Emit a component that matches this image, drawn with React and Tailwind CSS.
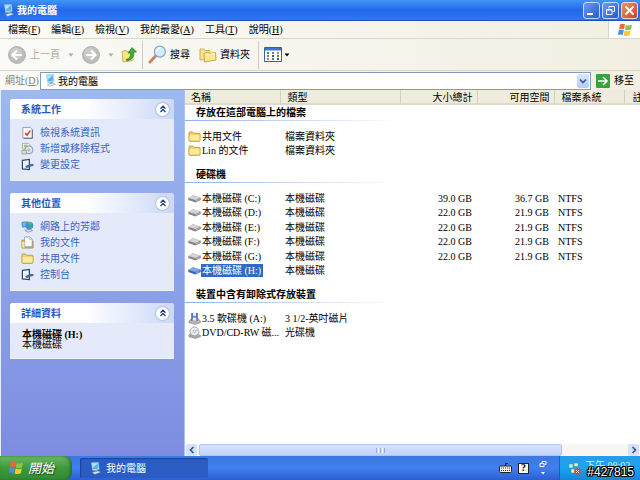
import React from 'react';

const ComputerIcon = ({ className }) => (
  <svg className={className} viewBox="0 0 16 16" aria-hidden="true">
    <path d="M3 1 11.500.5l1 8.500-8 1.500z" fill="#d8ecfa" stroke="#8fb8dc" strokeWidth=".7" />
    <path d="M4 2 10.700 1.500l.8 6.500-6.500 1.200z" fill="#4fb4f4" />
    <path d="M4 2 10.700 1.500l-6 5.500z" fill="#b4e6fd" />
    <path d="m6.500 10 4-.7.6 2-4 .7z" fill="#8ea6bc" />
    <path d="m4 12.800 7.500-1.800 2.500 1.500-7 2.700z" fill="#e6eef6" stroke="#7890b0" strokeWidth=".7" />
  </svg>
);

const WindowsFlag = ({ className }) => (
  <svg className={className} viewBox="0 0 16 14" aria-hidden="true">
    <path d="M3 1.500Q5.500.2 8 1.500L7 6.300Q4.500 5.200 2 6.300z" fill="#e8683c" />
    <path d="M8.800 1.900Q11.500 3 15 1.800L14 6.600Q11 8 7.900 6.700z" fill="#8cc63c" />
    <path d="M1.800 7.200Q4.300 6 6.800 7.200L5.800 12Q3.300 10.800.8 12z" fill="#4a90e2" />
    <path d="M7.600 7.600Q10.500 9 13.800 7.500L12.800 12.300Q9.500 13.600 6.600 12.400z" fill="#f8c832" />
  </svg>
);

const FolderIcon = ({ className }) => (
  <svg className={className} viewBox="0 0 14 12" aria-hidden="true">
    <path d="M1 2.500Q1 1.200 2 1.200h3l1.200 1.300H12q1 0 1 1V10q0 1.200-1 1.200H2q-1 0-1-1.200z" fill="#f3d469" stroke="#b8922f" strokeWidth=".9" />
    <path d="M1.800 4.500h10.500v5.700H1.800z" fill="#fbeaa0" />
  </svg>
);

const DriveIcon = ({ className, selected }) => (
  <svg className={className} viewBox="0 0 14 10" aria-hidden="true">
    <path d="M.3 4.500 5.500 1.500l8.200 2.700v2.300L8 9.300.3 6.700z" fill={selected ? '#3a63b4' : '#858585'} />
    <path d="M.3 4.500 5.500 1.500l8.200 2.700L8 6.700z" fill={selected ? '#82a8e4' : '#d4d4d4'} />
    <path d="m8.300 7.200 4-1.700v.9l-4 1.900z" fill={selected ? '#a8c8f8' : '#c4c4c4'} />
  </svg>
);

const FloppyIcon = ({ className }) => (
  <svg className={className} viewBox="0 0 14 14" aria-hidden="true">
    <path d="M1 9.500 4 7h7l2.500 3v1.500L8 13.500 1 11.500z" fill="#b4b4b4" stroke="#858585" strokeWidth=".6" />
    <path d="M3.500 1h7v8.500h-7z" fill="#4660b0" />
    <path d="M5.200 1h3.600v3.500H5.200zM5 6h4v3.500H5z" fill="#e6ebf8" />
  </svg>
);

const DiscIcon = ({ className }) => (
  <svg className={className} viewBox="0 0 14 14" aria-hidden="true">
    <path d="M1 9.500 5 7.500l8.500 2.500v1.500L8 13.500 1 11.500z" fill="#a8a8a8" stroke="#858585" strokeWidth=".6" />
    <circle cx="7" cy="5.800" r="4.800" fill="#e9ebee" stroke="#909498" strokeWidth=".8" />
    <path d="M7 5.800 10.500 2.500 11.600 5z" fill="#bcd8f0" />
    <circle cx="7" cy="5.800" r="1.400" fill="#fff" stroke="#8f9398" strokeWidth=".7" />
  </svg>
);

const InfoIcon = ({ className }) => (
  <svg className={className} viewBox="0 0 14 14" aria-hidden="true">
    <path d="M2 1.500h8l2 2V13H2z" fill="#fff" stroke="#8b98b4" />
    <path d="M12.300 4v9.300H3" fill="none" stroke="#5f6b86" />
    <path d="m4.500 7.500 2 2.500L10 5" fill="none" stroke="#d93a2b" strokeWidth="1.700" />
  </svg>
);

const ProgramsIcon = ({ className }) => (
  <svg className={className} viewBox="0 0 14 14" aria-hidden="true">
    <path d="M1.500 1.500H8l2 2v4h-8.500z" fill="#f2f5ea" stroke="#9aa584" strokeWidth=".8" />
    <path d="M3 3.500h4M3 5.200h3" stroke="#8eae50" />
    <circle cx="8.500" cy="8.500" r="4.300" fill="#dfe6ee" stroke="#7888a0" strokeWidth=".9" />
    <circle cx="8.500" cy="8.500" r="1.200" fill="#fff" stroke="#7888a0" strokeWidth=".7" />
    <path d="M1 9h5v4H1z" fill="#d6dccb" stroke="#8b9478" strokeWidth=".7" />
  </svg>
);

const SettingsIcon = ({ className }) => (
  <svg className={className} viewBox="0 0 14 14" aria-hidden="true">
    <path d="M1.500 2.500 9 1.500v11l-7.500-.8z" fill="#eaf3fc" stroke="#27496f" strokeWidth="1.300" />
    <path d="m5 9 5.500-2.200 2.800.2-.5 1.400-2.600.4L6 10.500z" fill="#56789e" stroke="#2d4766" strokeWidth=".6" />
  </svg>
);

const NetworkIcon = ({ className }) => (
  <svg className={className} viewBox="0 0 14 14" aria-hidden="true">
    <path d="M1 2.500 7 2l.5 5-6 .7z" fill="#62bdf0" stroke="#4678a8" strokeWidth=".8" />
    <circle cx="9" cy="6" r="4.200" fill="#3a92d8" />
    <path d="M7 3q3-2 5 .5L10 6 8.500 5zM9 8l3-1-1 2.500z" fill="#64bd50" />
    <path d="m4 11 6-1 2.500 1.500-5 1.800z" fill="#d8dde6" stroke="#75839b" strokeWidth=".7" />
  </svg>
);

const DocumentsIcon = ({ className }) => (
  <svg className={className} viewBox="0 0 14 14" aria-hidden="true">
    <path d="M1 4.500h3l1 1h8V13H1z" fill="#eec250" stroke="#a8802c" strokeWidth=".8" />
    <path d="M4 1h5.500L12 3.200v8.300H4z" fill="#fff" stroke="#7790b8" strokeWidth=".8" />
    <path d="M9 1.500v2.300h2.500" fill="none" stroke="#9bb4dc" strokeWidth=".8" />
    <path d="M1.300 6.500h2.500v6H1.300z" fill="#fbe7a0" />
  </svg>
);

const NavCircle = ({ className, flip }) => (
  <svg className={className} viewBox="0 0 18 18" aria-hidden="true">
    <circle cx="9" cy="9" r="8.500" fill="#bcbcb9" stroke="#aaaaa6" strokeWidth=".8" />
    <circle cx="8" cy="7.500" r="6" fill="#cacac7" />
    <path d={flip ? 'M4 9h9M9 4.500 13.500 9 9 13.500' : 'M14 9H5M9 4.500 4.500 9 9 13.500'} fill="none" stroke="#fff" strokeWidth="2.200" />
  </svg>
);

const UpFolderIcon = ({ className }) => (
  <svg className={className} viewBox="0 0 16 16" aria-hidden="true">
    <path d="m1 4.500 4-1 1 1.500 6-1v9.500L2 15z" fill="#f8e38a" stroke="#c7a23c" strokeWidth=".8" />
    <path d="M5 12.500q5-1 4.500-6.500H7l4-5.500L15.500 5h-2.700q1 7-6.800 9z" fill="#43ae35" stroke="#247c22" strokeWidth=".7" />
  </svg>
);

const SearchIcon = ({ className }) => (
  <svg className={className} viewBox="0 0 20 20" aria-hidden="true">
    <path d="m2 18 6-6.500" stroke="#c68258" strokeWidth="3" strokeLinecap="round" />
    <circle cx="12.500" cy="7" r="5.800" fill="#d3ecfb" stroke="#86a9cd" strokeWidth="1.300" />
    <path d="M9 6.500q1-3.200 4-3.300" fill="none" stroke="#fff" strokeWidth="1.500" />
  </svg>
);

const FoldersIcon = ({ className }) => (
  <svg className={className} viewBox="0 0 18 16" aria-hidden="true">
    <path d="M1 2h4l1 1.500h5V12l-10 1z" fill="#f7e394" stroke="#cfa945" strokeWidth=".9" />
    <path d="M5 6.500 9 5l1 1.500 6.500-1L17 13 5.500 15z" fill="#fbe88e" stroke="#c99d35" strokeWidth=".9" />
    <path d="m6 8 10-1.500" stroke="#fff8d0" />
  </svg>
);

const ViewsIcon = ({ className }) => (
  <svg className={className} viewBox="0 0 18 15" aria-hidden="true">
    <path d="M.5.5h17v14H.5z" fill="#fff" stroke="#33609f" />
    <path d="M1 1h16v2.500H1z" fill="#3c76cc" />
    <path d="M3 5h2v2H3zM13 8h2v2h-2z" fill="#4a8a4a" />
    <path d="M8 5h2v2H8zM3 8h2v2H3z" fill="#6d7f9e" />
    <path d="M13 5h2v2h-2zM3 11h2v2H3z" fill="#d4764e" />
    <path d="M8 8h2v2H8zM13 11h2v2h-2z" fill="#3c5aa8" />
    <path d="M8 11h2v2H8z" fill="#4a8a4a" />
  </svg>
);

const Chevron = ({ className, d }) => (
  <svg className={className} viewBox="0 0 8 8" aria-hidden="true">
    <path d={d} fill="none" stroke="#3d5688" strokeWidth="1.700" />
  </svg>
);

const Caret = ({ className }) => (
  <svg className={className} viewBox="0 0 6 4" aria-hidden="true">
    <path d="M.5.5h5L3 3.500z" fill="currentColor" />
  </svg>
);

const menus = [
  ['檔案', 'F'],
  ['編輯', 'E'],
  ['檢視', 'V'],
  ['我的最愛', 'A'],
  ['工具', 'T'],
  ['說明', 'H'],
];

const systemTasks = [
  { icon: InfoIcon, label: '檢視系統資訊' },
  { icon: ProgramsIcon, label: '新增或移除程式' },
  { icon: SettingsIcon, label: '變更設定' },
];

const otherPlaces = [
  { icon: NetworkIcon, label: '網路上的芳鄰' },
  { icon: DocumentsIcon, label: '我的文件' },
  { icon: FolderIcon, label: '共用文件' },
  { icon: SettingsIcon, label: '控制台' },
];

const groups = [
  {
    title: '存放在這部電腦上的檔案',
    items: [
      { icon: FolderIcon, name: '共用文件', type: '檔案資料夾' },
      { icon: FolderIcon, name: 'Lin 的文件', type: '檔案資料夾' },
    ],
  },
  {
    title: '硬碟機',
    items: [
      { icon: DriveIcon, name: '本機磁碟 (C:)', type: '本機磁碟', size: '39.0 GB', free: '36.7 GB', fs: 'NTFS' },
      { icon: DriveIcon, name: '本機磁碟 (D:)', type: '本機磁碟', size: '22.0 GB', free: '21.9 GB', fs: 'NTFS' },
      { icon: DriveIcon, name: '本機磁碟 (E:)', type: '本機磁碟', size: '22.0 GB', free: '21.9 GB', fs: 'NTFS' },
      { icon: DriveIcon, name: '本機磁碟 (F:)', type: '本機磁碟', size: '22.0 GB', free: '21.9 GB', fs: 'NTFS' },
      { icon: DriveIcon, name: '本機磁碟 (G:)', type: '本機磁碟', size: '22.0 GB', free: '21.9 GB', fs: 'NTFS' },
      { icon: DriveIcon, name: '本機磁碟 (H:)', type: '本機磁碟', selected: true },
    ],
  },
  {
    title: '裝置中含有卸除式存放裝置',
    items: [
      { icon: FloppyIcon, name: '3.5 軟碟機 (A:)', type: '3 1/2-英吋磁片' },
      { icon: DiscIcon, name: 'DVD/CD-RW 磁...', type: '光碟機' },
    ],
  },
];

const TitleBar = () => (
  <header className="flex h-[21px] shrink-0 items-center bg-linear-to-b from-[#3f95f8] via-[#2468e8] to-[#2a78f4] pl-[2px] pr-[2px] border-b border-[#1c4fc0]">
    <ComputerIcon className="h-[13px] w-[13px]" />
    <h1 className="ml-[2px] flex-1 font-bold text-white">我的電腦</h1>
    <div className="flex gap-[2px]">
      <button aria-label="最小化" className="flex h-[17px] w-[17px] items-center justify-center rounded-[3px] border border-[#c8dafa] bg-linear-to-br from-[#6e9df5] to-[#2456d0]">
        <svg className="h-[11px] w-[11px]" viewBox="0 0 11 11"><path d="M1 8h6v2H1z" fill="#fff" /></svg>
      </button>
      <button aria-label="還原" className="flex h-[17px] w-[17px] items-center justify-center rounded-[3px] border border-[#c8dafa] bg-linear-to-br from-[#6e9df5] to-[#2456d0]">
        <svg className="h-[11px] w-[11px]" viewBox="0 0 11 11" fill="none" stroke="#fff"><path d="M4 3.500v-2h5.500v5H8M1.500 4.500H7v5H1.500zM1 5h6" /></svg>
      </button>
      <button aria-label="關閉" className="flex h-[17px] w-[17px] items-center justify-center rounded-[3px] border border-[#f4d4cc] bg-linear-to-br from-[#f0906c] to-[#cc4420]">
        <svg className="h-[11px] w-[11px]" viewBox="0 0 11 11"><path d="m1.500 1.500 8 8m0-8-8 8" stroke="#fff" strokeWidth="1.800" /></svg>
      </button>
    </div>
  </header>
);

const MenuBar = () => (
  <nav className="flex h-[18px] shrink-0 border-b border-[#dad7c8] bg-linear-to-r from-[#fafaf7] to-[#f2efe2]">
    <div className="flex flex-1 items-center gap-[11px] pl-2">
      {menus.map(([label, key]) => (
        <button key={key} className="whitespace-nowrap">
          {label}(<u>{key}</u>)
        </button>
      ))}
    </div>
    <div className="flex w-8 items-center justify-center border-l border-[#d8d5c6] bg-white">
      <WindowsFlag className="h-[14px] w-4" />
    </div>
  </nav>
);

const Toolbar = () => (
  <div className="flex h-8 shrink-0 items-center border-b border-[#d8d5c6] bg-linear-to-r from-[#fafaf7] to-[#f2efe2] pl-2">
    <button className="flex items-center text-[#aaa99f]">
      <NavCircle className="h-[18px] w-[18px]" />
      <span className="ml-1">上一頁</span>
      <Caret className="ml-2 h-1 w-[6px]" />
    </button>
    <button aria-label="下一頁" className="ml-2 flex items-center text-[#aaa99f]">
      <NavCircle className="h-[18px] w-[18px]" flip />
      <Caret className="ml-2 h-1 w-[6px]" />
    </button>
    <button aria-label="上移" className="ml-[7px]">
      <UpFolderIcon className="h-4 w-4" />
    </button>
    <div className="ml-[5px] h-7 w-px bg-[#d0cdbf]" />
    <button className="ml-[5px] flex items-center">
      <SearchIcon className="h-[19px] w-[19px]" />
      <span className="ml-[3px]">搜尋</span>
    </button>
    <button className="ml-[9px] flex items-center">
      <FoldersIcon className="h-4 w-[18px]" />
      <span className="ml-[3px]">資料夾</span>
    </button>
    <div className="ml-2 h-7 w-px bg-[#d0cdbf]" />
    <button aria-label="檢視模式" className="ml-[5px] flex items-center">
      <ViewsIcon className="h-[15px] w-[18px]" />
      <Caret className="ml-[2px] h-1 w-[6px]" />
    </button>
  </div>
);

const AddressBar = () => (
  <div className="flex h-[19px] shrink-0 items-center bg-linear-to-r from-[#fafaf7] to-[#f2efe2] pl-[5px] pr-[6px]">
    <label htmlFor="address" className="whitespace-nowrap text-[#85837a]">
      網址(<u>D</u>)
    </label>
    <div className="ml-px flex h-[18px] flex-1 items-center border border-[#7f9db9] bg-white pl-[3px] pr-px">
      <ComputerIcon className="h-[13px] w-[13px]" />
      <input id="address" defaultValue="我的電腦" className="ml-px h-4 min-w-0 flex-1 bg-transparent outline-none" />
      <button aria-label="展開網址" className="flex h-[14px] w-3 items-center justify-center rounded-[2px] bg-linear-to-b from-[#dce7fd] to-[#b5cbf6]">
        <Chevron className="h-2 w-2" d="m1 2.500 3 3 3-3" />
      </button>
    </div>
    <button className="ml-[5px] flex items-center">
      <svg className="h-[14px] w-[14px]" viewBox="0 0 14 14" aria-hidden="true">
        <rect width="14" height="14" rx="1" fill="#38a338" />
        <path d="M2 7h9M7 3l4 4-4 4" fill="none" stroke="#fff" strokeWidth="1.600" />
      </svg>
      <span className="ml-1">移至</span>
    </button>
  </div>
);

const Panel = ({ title, children }) => (
  <section className="overflow-hidden rounded-t-[3px] border-b border-[#eef1fd] bg-[#e5eafb]">
    <div className="flex h-5 items-center justify-between bg-linear-to-r from-white from-45% to-[#cbd8f7] pl-[11px] pr-[5px]">
      <h2 className="font-bold text-[#2458c4]">{title}</h2>
      <button aria-label="收合" className="flex h-[13px] w-[13px] items-center justify-center rounded-full bg-white shadow-[0_0_2px_#7288b8]">
        <svg className="h-2 w-2" viewBox="0 0 8 8" fill="none" stroke="#223a80" strokeWidth="1.300">
          <path d="m1.500 3.700 2.500-2.500 2.500 2.500M1.500 7l2.500-2.500L6.500 7" />
        </svg>
      </button>
    </div>
    {children}
  </section>
);

const LinkList = ({ items }) => (
  <ul className="pb-2 pl-[11px] pt-[5px]">
    {items.map(({ icon: Icon, label }) => (
      <li key={label} className="h-4">
        <a href="#" className="flex h-4 items-center gap-[6px] text-[#3566c4]">
          <Icon className="h-[13px] w-[13px]" />
          {label}
        </a>
      </li>
    ))}
  </ul>
);

const Sidebar = () => (
  <aside className="flex w-[184px] shrink-0 flex-col gap-3 border-l border-[#e4ebfb] bg-linear-to-b from-[#9cb9f0] to-[#7d8ce0] pb-3 pl-[9px] pr-[10px] pt-[9px]">
    <Panel title="系統工作">
      <LinkList items={systemTasks} />
    </Panel>
    <Panel title="其他位置">
      <LinkList items={otherPlaces} />
    </Panel>
    <Panel title="詳細資料">
      <div className="pb-2 pl-3 pt-[7px] leading-[10px]">
        <p className="font-bold">本機磁碟 (H:)</p>
        <p>本機磁碟</p>
      </div>
    </Panel>
  </aside>
);

const FileTable = () => (
  <table className="w-full table-fixed border-collapse">
    <colgroup>
      <col className="w-[95px]" />
      <col className="w-[120px]" />
      <col className="w-[77px]" />
      <col className="w-[77px]" />
      <col className="w-[70px]" />
      <col />
    </colgroup>
    <thead>
      <tr className="h-[15px] bg-[#efecdd] text-left shadow-[inset_0_-2px_0_#dedbca]">
        <th className="border-r border-[#d3d0c0] p-0 pl-[6px] font-normal">名稱</th>
        <th className="border-r border-[#d3d0c0] p-0 pl-[7px] font-normal">類型</th>
        <th className="border-r border-[#d3d0c0] p-0 pr-1 text-right font-normal">大小總計</th>
        <th className="border-r border-[#d3d0c0] p-0 pr-1 text-right font-normal">可用空間</th>
        <th className="border-r border-[#d3d0c0] p-0 pl-[7px] font-normal">檔案系統</th>
        <th className="overflow-hidden whitespace-nowrap p-0 pl-2 font-normal">註解</th>
      </tr>
    </thead>
    {groups.map((group, i) => (
      <React.Fragment key={group.title}>
        <tbody>
          <tr>
            <th colSpan={6} scope="rowgroup" className={i === 0 ? 'p-0 pb-2 pt-px text-left' : 'p-0 pb-2 pt-[10px] text-left'}>
              <div className="h-[14px] pl-[11px] leading-[14px]">{group.title}</div>
              <div className="h-px w-[215px] bg-linear-to-r from-[#8db4e6] to-white" />
            </th>
          </tr>
        </tbody>
        <tbody>
          {group.items.map(({ icon: Icon, name, type, size, free, fs, selected }) => (
            <tr key={name} className="whitespace-nowrap odd:h-[14px] even:h-[15px]">
              <td className="p-0 pl-[3px]">
                <div className="flex items-center">
                  <Icon className="h-[13px] w-[13px] shrink-0" {...(selected ? { selected } : {})} />
                  <span className={selected ? 'bg-[#316ac5] pl-px pr-[2px] text-white' : 'pl-px'}>{name}</span>
                </div>
              </td>
              <td className="p-0 pl-[5px]">{type}</td>
              <td className="p-0 pr-[5px] text-right">{size}</td>
              <td className="p-0 pr-[5px] text-right">{free}</td>
              <td className="p-0 pl-1">{fs}</td>
              <td className="p-0" />
            </tr>
          ))}
        </tbody>
      </React.Fragment>
    ))}
  </table>
);

const ScrollBar = () => (
  <div className="flex h-3 shrink-0 items-stretch gap-[2px] bg-[#f7f6f2] px-px">
    <button aria-label="向左捲動" className="flex w-[11px] items-center justify-center rounded-[2px] bg-[#d5e1fb]">
      <Chevron className="h-2 w-2" d="M5.500 1 2.500 4l3 3" />
    </button>
    <div className="flex flex-1">
      <div className="flex w-[85%] items-center justify-center gap-px rounded-[2px] border border-[#b0c4f0] bg-linear-to-b from-[#d6e2fd] to-[#c3d3fa]">
        <i className="h-[5px] w-px bg-[#94abdc]" />
        <i className="h-[5px] w-px bg-white" />
        <i className="h-[5px] w-px bg-[#94abdc]" />
        <i className="h-[5px] w-px bg-white" />
        <i className="h-[5px] w-px bg-[#94abdc]" />
      </div>
    </div>
    <button aria-label="向右捲動" className="flex w-[11px] items-center justify-center rounded-[2px] bg-[#d5e1fb]">
      <Chevron className="h-2 w-2" d="m2.500 1 3 3-3 3" />
    </button>
  </div>
);

const Taskbar = () => (
  <footer className="flex h-6 shrink-0 items-stretch bg-linear-to-b from-[#3b78e0] via-[#4080ec] to-[#2c5ed2] text-white">
    <button className="flex w-[72px] items-center gap-1 rounded-r-lg bg-linear-to-b from-[#6cb865] via-[#3c9a3c] to-[#338a35] pl-2 text-[13px] italic shadow-[inset_-2px_0_3px_#2a702c] [text-shadow:1px_1px_1px_#20501f]">
      <WindowsFlag className="h-[14px] w-4" />
      開始
    </button>
    <button className="my-[2px] ml-2 flex w-32 items-center gap-1 rounded-[2px] bg-[#2a5cc4] pl-[9px] shadow-[inset_1px_1px_1px_#1c429c]">
      <ComputerIcon className="h-[13px] w-[13px]" />
      我的電腦
    </button>
    <div className="ml-auto flex items-center gap-[6px] pr-3">
      <svg className="h-3 w-[13px]" viewBox="0 0 13 12" aria-hidden="true">
        <path d="M6.500 4V1.500H9" fill="none" stroke="#222" />
        <rect x=".5" y="4" width="12" height="6.500" rx="1" fill="#f5f2e4" stroke="#222" />
        <path d="M2 6h9M2 8.500h9" stroke="#333" strokeWidth="1" strokeDasharray="1 1" />
      </svg>
      <span className="flex h-[11px] w-[11px] items-center justify-center border border-[#222] bg-[#fffef0] font-bold leading-none text-black">?</span>
      <svg className="ml-1 h-4 w-2" viewBox="0 0 8 16" fill="none" stroke="#fff" aria-hidden="true">
        <path d="M3 3.500v-2h4v3H5.500M1 3.500h4v3H1z" />
        <path d="M2 12h4l-2 2.500z" fill="#fff" stroke="none" />
      </svg>
    </div>
    <div className="relative flex w-[81px] items-start border-l border-[#1a5cb8] bg-linear-to-b from-[#2a9ce8] via-[#1aa4f2] to-[#1486d8] pl-2 pt-[3px]">
      <svg className="mt-[3px] h-[13px] w-[13px]" viewBox="0 0 13 13" aria-hidden="true">
        <path d="M1 2h4v4H1zM6 1h4v3.500H6zM3 7h4v4H3z" fill="#e0f4e8" stroke="#3c9c78" strokeWidth=".6" />
        <circle cx="9.500" cy="9.500" r="3.300" fill="#e04830" />
        <path d="m8 8 3 3m0-3-3 3" stroke="#fff" />
      </svg>
      <time className="ml-1 whitespace-nowrap text-[#d4eefc]">下午 08:02</time>
      <span className="absolute bottom-px right-[6px] font-['Liberation_Sans',sans-serif] text-[12px] leading-[14px] [text-shadow:1px_0_#000,-1px_0_#000,0_1px_#000,0_-1px_#000,1px_1px_#000,-1px_-1px_#000,1px_-1px_#000,-1px_1px_#000]">
        #427815
      </span>
    </div>
  </footer>
);

export default function App() {
  return (
    <div className="flex h-screen flex-col overflow-hidden bg-white font-['Liberation_Serif','Noto_Sans_CJK_TC',serif] text-[10px] leading-[13px] text-black">
      <TitleBar />
      <MenuBar />
      <Toolbar />
      <AddressBar />
      <div className="flex min-h-0 flex-1">
        <Sidebar />
        <main className="flex min-w-0 flex-1 flex-col border-l border-[#a9c2ee]">
          <div className="min-h-0 flex-1 overflow-hidden">
            <FileTable />
          </div>
          <ScrollBar />
        </main>
      </div>
      <Taskbar />
    </div>
  );
}
